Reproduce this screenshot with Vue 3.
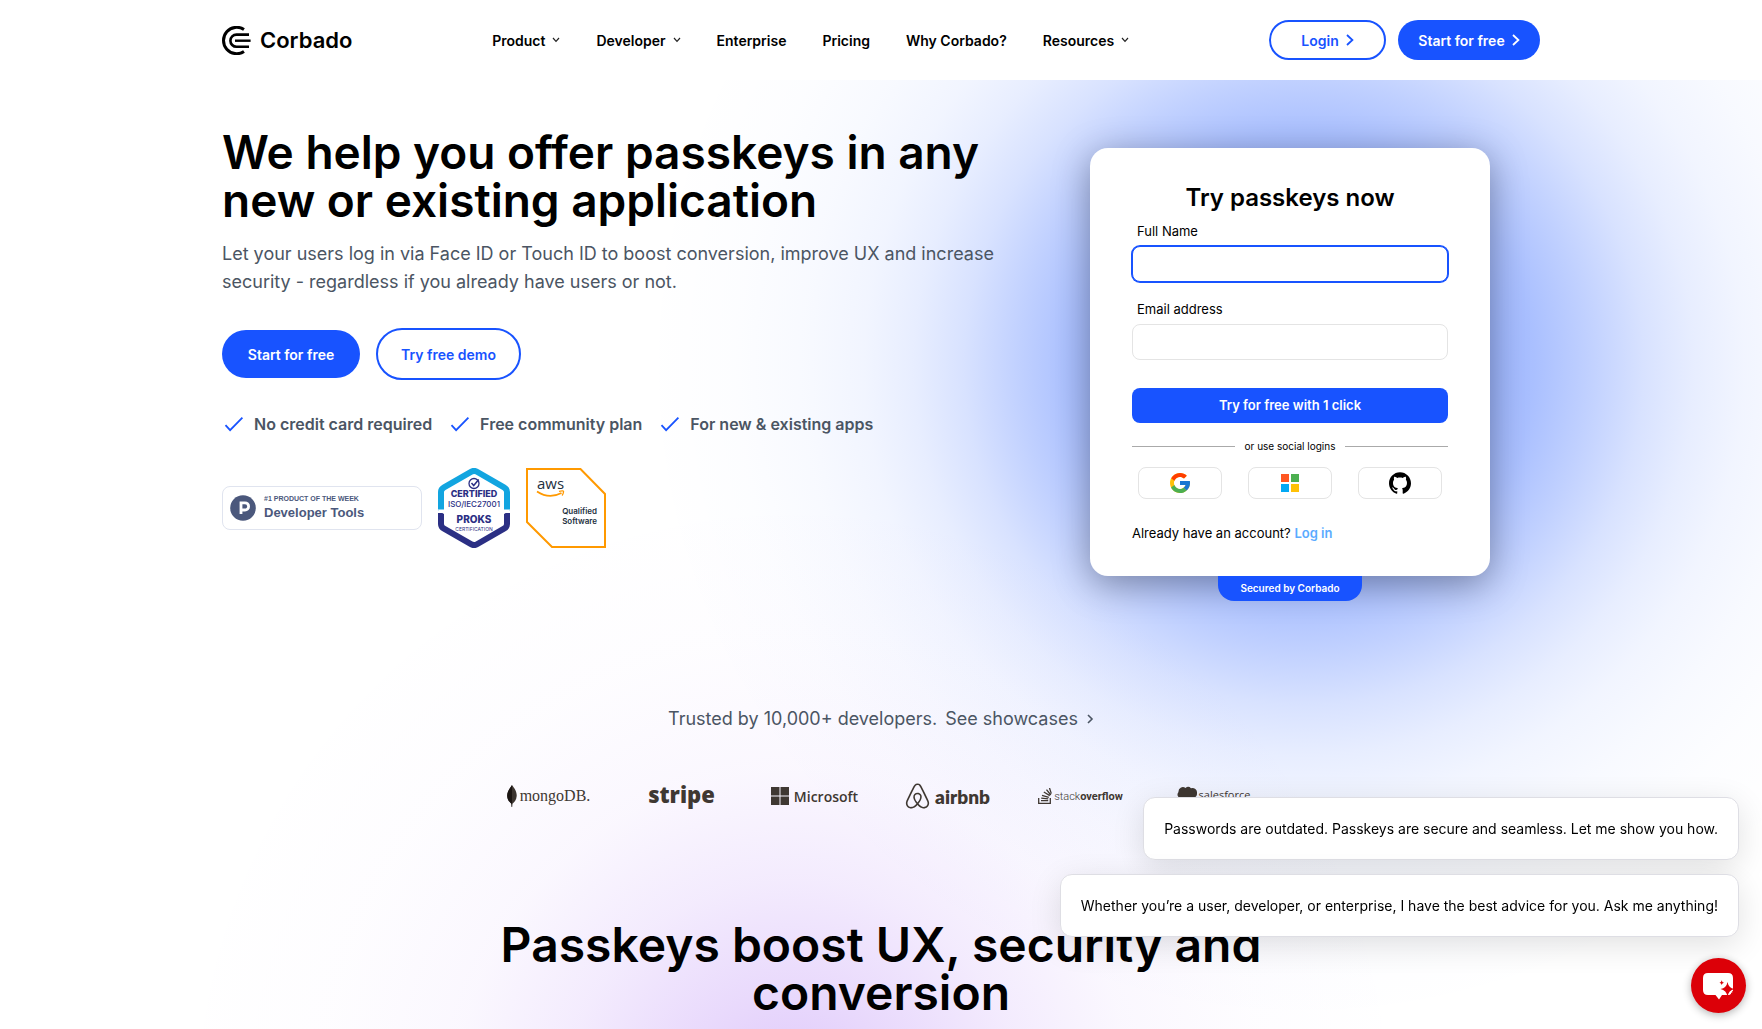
<script setup>
const nav = [
  { label: 'Product', menu: true },
  { label: 'Developer', menu: true },
  { label: 'Enterprise', menu: false },
  { label: 'Pricing', menu: false },
  { label: 'Why Corbado?', menu: false },
  { label: 'Resources', menu: true },
]
const benefits = ['No credit card required', 'Free community plan', 'For new & existing apps']
const messages = [
  'Passwords are outdated. Passkeys are secure and seamless. Let me show you how.',
  'Whether you’re a user, developer, or enterprise, I have the best advice for you. Ask me anything!',
]
</script>

<template>
  <div class="page">
    <header class="header">
      <div class="container header-row">
        <a href="#" class="brand">
          <svg width="29" height="29" viewBox="0 0 29 29" fill="none" stroke="#000" stroke-width="3" aria-hidden="true">
            <path d="M22 3.5A13.2 13.2 0 1 0 22 25.5" />
            <path d="M27 8.6H14.5A5.9 5.9 0 0 0 14.5 20.8H27" stroke-width="2.6" />
            <path d="M13 14.7H28.6" stroke-width="2.4" />
          </svg>
          <span>Corbado</span>
        </a>
        <nav class="nav">
          <a v-for="item in nav" :key="item.label" href="#">
            {{ item.label }}
            <svg v-if="item.menu" width="8" height="6" viewBox="0 0 8 6" fill="none" stroke="#222" stroke-width="1.2"><path d="M1 1l3 3.4L7 1" /></svg>
          </a>
        </nav>
        <div class="actions">
          <a href="#" class="pill outline login">Login
            <svg width="8" height="12" viewBox="0 0 8 12" fill="none" stroke="currentColor" stroke-width="1.8"><path d="M1 1l5.4 5L1 11" /></svg>
          </a>
          <a href="#" class="pill solid start">Start for free
            <svg width="8" height="12" viewBox="0 0 8 12" fill="none" stroke="currentColor" stroke-width="1.8"><path d="M1 1l5.4 5L1 11" /></svg>
          </a>
        </div>
      </div>
    </header>

    <main>
      <section class="container hero">
        <div class="intro">
          <h1>We help you offer passkeys in any new or existing application</h1>
          <p class="lead">Let your users log in via Face ID or Touch ID to boost conversion, improve UX and increase security - regardless if you already have users or not.</p>
          <div class="cta">
            <a href="#" class="pill solid big">Start for free</a>
            <a href="#" class="pill outline big">Try free demo</a>
          </div>
          <ul class="benefits">
            <li v-for="b in benefits" :key="b">
              <svg width="24" height="24" viewBox="0 0 24 24" fill="none" stroke="#1853ff" stroke-width="1.8"><path d="M3.5 13.2l4.6 5L20.4 5.6" /></svg>
              {{ b }}
            </li>
          </ul>
          <div class="badges">
            <div class="ph">
              <svg width="26" height="26" viewBox="0 0 26 26" aria-hidden="true">
                <circle cx="13" cy="13" r="12.8" fill="#4b587c" />
                <path d="M11 19V7.8h4a3.6 3.6 0 0 1 0 7.2H11" fill="none" stroke="#fff" stroke-width="2.8" />
              </svg>
              <div>
                <span class="ph-top">#1 PRODUCT OF THE WEEK</span>
                <span class="ph-main">Developer Tools</span>
              </div>
            </div>
            <svg class="iso" width="72" height="80" viewBox="0 0 72 80">
              <path d="M3 43V24Q3 21 6 19.300L33 3.800Q36 2 39 3.800L66 19.300Q69 21 69 24V43" fill="#fff" stroke="#12a5e0" stroke-width="6" />
              <path d="M3 45V56Q3 59 6 60.700L33 76.200Q36 78 39 76.200L66 60.700Q69 59 69 56V45" fill="#fff" stroke="#2b2f84" stroke-width="6" />
              <path d="M0 42.500l6 3.500V41.500H0zM72 42.500l-6 3.500V41.500h6z" fill="#fff" />
              <circle cx="36" cy="15.500" r="5" fill="none" stroke="#2b2f84" stroke-width="1.300" />
              <path d="M33.500 15l2.200 2.500 5-6" fill="none" stroke="#2b2f84" stroke-width="1.500" />
              <text x="36" y="29" class="iso-a">CERTIFIED</text>
              <text x="36" y="39" class="iso-b">ISO/IEC27001</text>
              <text x="36" y="55" class="iso-c">PROKS</text>
              <text x="36" y="63" class="iso-d">CERTIFICATION</text>
            </svg>
            <svg class="aws" width="80" height="80" viewBox="0 0 80 80">
              <path d="M1 1H54.500L79 26V79H26L1 54Z" fill="#fff" stroke="#f90" stroke-width="2" />
              <text x="11" y="21" class="aws-logo">aws</text>
              <path d="M11 23.500Q23 31.500 35.500 25" fill="none" stroke="#f90" stroke-width="1.700" />
              <path d="M33 23.300Q38 22 37.500 24Q37.300 26 36 27.500" fill="none" stroke="#f90" stroke-width="1.300" />
              <text x="71" y="46" class="aws-text">Qualified</text>
              <text x="71" y="56" class="aws-text">Software</text>
            </svg>
          </div>
        </div>

        <div class="demo">
          <form class="card" @submit.prevent>
            <h2>Try passkeys now</h2>
            <label for="name">Full Name</label>
            <input id="name" class="active" type="text" />
            <label for="email" class="second">Email address</label>
            <input id="email" type="email" />
            <button class="submit" type="submit">Try for free with 1 click</button>
            <div class="divider"><span>or use social logins</span></div>
            <div class="social">
              <button type="button" aria-label="Google">
                <svg width="24" height="24" viewBox="0 0 48 48">
                  <path fill="#FFC107" d="M43.611,20.083H42V20H24v8h11.303c-1.649,4.657-6.08,8-11.303,8c-6.627,0-12-5.373-12-12c0-6.627,5.373-12,12-12c3.059,0,5.842,1.154,7.961,3.039l5.657-5.657C34.046,6.053,29.268,4,24,4C12.955,4,4,12.955,4,24c0,11.045,8.955,20,20,20c11.045,0,20-8.955,20-20C44,22.659,43.862,21.35,43.611,20.083z" />
                  <path fill="#FF3D00" d="M6.306,14.691l6.571,4.819C14.655,15.108,18.961,12,24,12c3.059,0,5.842,1.154,7.961,3.039l5.657-5.657C34.046,6.053,29.268,4,24,4C16.318,4,9.656,8.337,6.306,14.691z" />
                  <path fill="#4CAF50" d="M24,44c5.166,0,9.86-1.977,13.409-5.192l-6.19-5.238C29.211,35.091,26.715,36,24,36c-5.202,0-9.619-3.317-11.283-7.946l-6.522,5.025C9.505,39.556,16.227,44,24,44z" />
                  <path fill="#1976D2" d="M43.611,20.083H42V20H24v8h11.303c-0.792,2.237-2.231,4.166-4.087,5.571l6.193,5.237C36.971,39.205,44,34,44,24C44,22.659,43.862,21.35,43.611,20.083z" />
                </svg>
              </button>
              <button type="button" aria-label="Microsoft">
                <svg width="18" height="18" viewBox="0 0 18 18">
                  <path fill="#ff5722" d="M0 0h8v8H0z" /><path fill="#4caf50" d="M10 0h8v8h-8z" />
                  <path fill="#03a9f4" d="M0 10h8v8H0z" /><path fill="#ffc107" d="M10 10h8v8h-8z" />
                </svg>
              </button>
              <button type="button" aria-label="GitHub">
                <svg width="22" height="22" viewBox="0 0 24 24">
                  <path d="M12 .297c-6.63 0-12 5.373-12 12 0 5.303 3.438 9.8 8.205 11.385.6.113.82-.258.82-.577 0-.285-.01-1.04-.015-2.04-3.338.724-4.042-1.61-4.042-1.61C4.422 18.07 3.633 17.7 3.633 17.7c-1.087-.744.084-.729.084-.729 1.205.084 1.838 1.236 1.838 1.236 1.07 1.835 2.809 1.305 3.495.998.108-.776.417-1.305.76-1.605-2.665-.3-5.466-1.332-5.466-5.93 0-1.31.465-2.38 1.235-3.22-.135-.303-.54-1.523.105-3.176 0 0 1.005-.322 3.3 1.23.96-.267 1.98-.399 3-.405 1.02.006 2.04.138 3 .405 2.28-1.552 3.285-1.23 3.285-1.23.645 1.653.24 2.873.12 3.176.765.84 1.23 1.91 1.23 3.22 0 4.61-2.805 5.625-5.475 5.92.42.36.81 1.096.81 2.22 0 1.606-.015 2.896-.015 3.286 0 .315.21.69.825.57C20.565 22.092 24 17.592 24 12.297c0-6.627-5.373-12-12-12" />
                </svg>
              </button>
            </div>
            <p class="existing">Already have an account? <a href="#">Log in</a></p>
          </form>
          <div class="secured">Secured by Corbado</div>
        </div>
      </section>

      <section class="trust">
        <p>Trusted by 10,000+ developers. <a href="#">See showcases
          <svg width="7" height="10" viewBox="0 0 7 10" fill="none" stroke="currentColor" stroke-width="1.6"><path d="M1 1l4 4-4 4" /></svg></a></p>
        <ul class="logos">
          <li class="mongo">
            <svg width="10" height="22" viewBox="0 0 10 22"><path d="M5 0C7 3 10 6 9.700 11C9.500 15 7 17.500 5.500 18.700L5.200 22H4.700L4.400 18.700C2.500 17 .3 15 .2 11C0 6 3.500 3 5 0z" fill="#3b342f" /><path d="M5 0C3.500 3 0 6 .2 11C.3 15 2.500 17 4.400 18.700L4.700 22H5z" fill="#1b1512" /></svg>
            <span>mongoDB.</span>
          </li>
          <li class="stripe"><span>stripe</span></li>
          <li class="microsoft">
            <svg width="18" height="18" viewBox="0 0 18 18" fill="#3f3832"><path d="M0 0h8.500v8.500H0zM9.500 0H18v8.500H9.500zM0 9.500h8.500V18H0zM9.500 9.500H18V18H9.500z" /></svg>
            <span>Microsoft</span>
          </li>
          <li class="airbnb">
            <svg width="25" height="26" viewBox="0 0 24 24" fill="#3f3832"><path d="M12.001 18.275c-1.353-1.697-2.148-3.184-2.413-4.457-.263-1.027-.16-1.848.291-2.465.477-.71 1.188-1.056 2.121-1.056s1.643.345 2.12 1.063c.446.61.558 1.432.286 2.465-.291 1.298-1.085 2.785-2.412 4.458zm9.601 1.14c-.185 1.246-1.034 2.28-2.2 2.783-2.253.98-4.483-.583-6.392-2.704 3.157-3.951 3.74-7.028 2.385-9.018-.795-1.14-1.933-1.695-3.394-1.695-2.944 0-4.563 2.49-3.927 5.382.37 1.565 1.352 3.343 2.917 5.332-.98 1.085-1.91 1.856-2.732 2.333-.636.344-1.245.558-1.828.609-2.679.399-4.778-2.2-3.825-4.88.132-.345.395-.98.845-1.961l.025-.053c1.464-3.178 3.242-6.79 5.285-10.795l.053-.132.58-1.116c.45-.822.635-1.19 1.351-1.643.346-.21.77-.315 1.246-.315.954 0 1.698.558 2.016 1.007.158.239.345.557.582.953l.558 1.089.08.159c2.041 4.004 3.821 7.608 5.279 10.794l.026.025.533 1.22.318.764c.243.613.294 1.222.213 1.858zm1.22-2.39c-.186-.583-.505-1.271-.9-2.094v-.03c-1.889-4.006-3.642-7.608-5.307-10.844l-.111-.163C15.317 1.461 14.468 0 12.001 0c-2.44 0-3.476 1.695-4.535 3.898l-.081.16c-1.669 3.236-3.421 6.843-5.303 10.847v.053l-.559 1.22c-.21.504-.317.768-.345.847C-.172 20.74 2.611 24 5.98 24c.027 0 .132 0 .265-.027h.372c1.75-.213 3.554-1.325 5.384-3.317 1.829 1.989 3.635 3.104 5.382 3.317h.372c.133.027.239.027.265.027 3.37.003 6.152-3.261 4.802-6.975z" /></svg>
            <span>airbnb</span>
          </li>
          <li class="stack">
            <svg width="14" height="16" viewBox="0 0 14 16" fill="none" stroke="#3f3832" stroke-width="1.300"><path d="M.7 10v5.300h11.600V10M3 12.700h7.200M3.200 10.200l7 .7M4 7.300l6.800 2M5.800 4l6 3.600M8.500 1.600l4.300 5.400M11.500 0l1.800 5.600" /></svg>
            <span>stack<b>overflow</b></span>
          </li>
          <li class="salesforce">
            <svg width="20" height="16" viewBox="0 0 20 16" fill="#3f3832"><path d="M8.500 2A4 4 0 0 1 14 2.300A4.600 4.600 0 0 1 20 7.200A4.500 4.500 0 0 1 14.500 12A4 4 0 0 1 9.500 14A4 4 0 0 1 3.500 12.500A4 4 0 0 1 1.500 6A4.400 4.400 0 0 1 8.500 2z" /></svg>
            <span>salesforce</span>
          </li>
        </ul>
      </section>

      <section class="boost">
        <h2>Passkeys boost UX, security and conversion</h2>
      </section>
    </main>

    <aside class="chat">
      <p v-for="m in messages" :key="m" class="bubble">{{ m }}</p>
      <button type="button" class="chat-button" aria-label="Open chat">
        <svg width="34" height="28" viewBox="0 0 34 28">
          <path d="M6 1H26Q31 1 31 6V18Q31 23 26 23H20L17 27.500L13.500 23H6Q1 23 1 18V6Q1 1 6 1Z" fill="#fff" />
          <path d="M25.500 10Q26.500 16 32.500 17Q26.500 18 25.500 25Q24.500 18 18.500 17Q24.500 16 25.500 10Z" fill="#dc0008" />
          <path d="M19.700 8.300Q20 10.500 22 10.800Q20 11 19.700 13Q19.400 11 17.500 10.800Q19.400 10.500 19.700 8.300Z" fill="#dc0008" />
          <path d="M28.500 23L31.500 18.500" stroke="#dc0008" stroke-width="1" />
        </svg>
      </button>
    </aside>
  </div>
</template>

<style>
html,
body {
  margin: 0;
}
</style>

<style scoped>
* {
  box-sizing: border-box;
}
.page {
  min-height: 100vh;
  overflow: hidden;
  color: #000;
  font-family: Inter, "Liberation Sans", sans-serif;
  background:
    radial-gradient(circle at 74% 365px, rgba(24, 83, 255, 0.5) 0, rgba(24, 83, 255, 0.46) 150px, rgba(24, 83, 255, 0.37) 230px, rgba(24, 83, 255, 0.27) 285px, rgba(24, 83, 255, 0.17) 340px, rgba(24, 83, 255, 0.1) 390px, rgba(24, 83, 255, 0.06) 440px, rgba(24, 83, 255, 0.03) 500px, rgba(24, 83, 255, 0.01) 570px, rgba(24, 83, 255, 0) 660px),
    radial-gradient(circle at 45% 1110px, rgba(140, 60, 240, 0.3) 0, rgba(140, 60, 240, 0.2) 110px, rgba(140, 60, 240, 0.1) 230px, rgba(140, 60, 240, 0.04) 340px, rgba(140, 60, 240, 0.01) 470px, rgba(140, 60, 240, 0) 620px),
    #fff;
}
a {
  color: inherit;
  text-decoration: none;
}
h1,
h2,
p,
ul {
  margin: 0;
  padding: 0;
}
ul {
  list-style: none;
}
.container {
  max-width: 1366px;
  margin: 0 auto;
  padding: 0 24px;
}
.header {
  background: #fff;
}
.header-row {
  height: 80px;
  display: flex;
  align-items: center;
  justify-content: space-between;
}
.brand {
  display: flex;
  align-items: center;
  gap: 9px;
  font-size: 22px;
  font-weight: 600;
}
.nav {
  display: flex;
  gap: 36px;
  font-size: 14px;
  font-weight: 600;
}
.nav a {
  display: flex;
  align-items: center;
  gap: 7px;
}
.actions {
  display: flex;
  gap: 12px;
}
.pill {
  display: flex;
  align-items: center;
  justify-content: center;
  gap: 7px;
  height: 40px;
  border-radius: 26px;
  font-size: 14px;
  font-weight: 600;
}
.solid {
  background: #1853ff;
  color: #fff;
}
.outline {
  border: 2px solid #1853ff;
  background: #fff;
  color: #1853ff;
}
.login {
  width: 117px;
}
.start {
  width: 142px;
}
.hero {
  display: grid;
  grid-template-columns: 1fr 500px;
}
.intro {
  padding-top: 48px;
}
h1,
.boost h2 {
  font-size: 46px;
  line-height: 48px;
  font-weight: 600;
}
.lead {
  margin-top: 16px;
  font-size: 18px;
  line-height: 28px;
  color: #4b5563;
}
.cta {
  display: flex;
  align-items: center;
  gap: 16px;
  margin-top: 32px;
}
.big {
  width: 138px;
  height: 48px;
}
.big.outline {
  width: 145px;
  height: 52px;
}
.benefits {
  display: flex;
  gap: 16px;
  margin-top: 32px;
  font-size: 16px;
  line-height: 24px;
  font-weight: 600;
  color: #4b5563;
}
.benefits li {
  display: flex;
  gap: 8px;
  white-space: nowrap;
}
.badges {
  display: flex;
  align-items: center;
  gap: 16px;
  margin-top: 32px;
}
.ph {
  display: flex;
  align-items: center;
  gap: 8px;
  width: 200px;
  height: 44px;
  padding-left: 7px;
  border: 1px solid #e0e4ef;
  border-radius: 8px;
  background: #fff;
  color: #4b587c;
  font-family: "Liberation Sans", Arial, sans-serif;
  font-weight: 700;
}
.ph span {
  display: block;
}
.ph-top {
  font-size: 7px;
  line-height: 10px;
}
.ph-main {
  font-size: 13px;
  line-height: 18px;
}
.iso text {
  fill: #2b2f84;
  text-anchor: middle;
}
.iso-a {
  font: 800 9px Inter, sans-serif;
}
.iso-b {
  font: 500 8px Inter, sans-serif;
}
.iso-c {
  font: 800 10px Inter, sans-serif;
}
.iso-d {
  font: 400 5px Inter, sans-serif;
}
.aws-logo {
  font: 400 15px "Open Sans", sans-serif;
  fill: #232f3e;
}
.aws-text {
  font: 600 8px Inter, sans-serif;
  fill: #232f3e;
  text-anchor: end;
}
.demo {
  display: flex;
  flex-direction: column;
  align-items: center;
  padding-top: 68px;
}
.card {
  display: flex;
  flex-direction: column;
  width: 400px;
  padding: 34px 42px 33px;
  border-radius: 18px;
  background: #fff;
  box-shadow: 0 8px 36px rgba(0, 0, 0, 0.36);
  font-size: 13px;
  line-height: 20px;
}
.card h2 {
  margin-bottom: 7px;
  font-size: 24px;
  line-height: 32px;
  font-weight: 600;
  text-align: center;
}
.card label {
  padding-left: 5px;
  margin-bottom: 5px;
}
.card .second {
  margin-top: 17px;
}
.card input {
  height: 36px;
  padding: 0 12px;
  border: 1px solid #e4e4e4;
  border-radius: 8px;
  background: #fff;
}
.card input.active {
  border-color: #1853ff;
  box-shadow: 0 0 0 1px #1853ff;
}
.submit {
  height: 35px;
  margin-top: 28px;
  padding: 0 0 2px;
  border: 0;
  border-radius: 8px;
  background: #1853ff;
  color: #fff;
  font: 600 13px Inter, sans-serif;
}
.divider {
  display: flex;
  align-items: center;
  gap: 10px;
  margin-top: 15px;
  font-size: 10px;
  line-height: 16px;
}
.divider::before,
.divider::after {
  content: "";
  flex: 1;
  height: 1px;
  background: #aaa;
}
.social {
  display: flex;
  justify-content: space-between;
  margin-top: 13px;
  padding: 0 6px;
}
.social button {
  display: flex;
  align-items: center;
  justify-content: center;
  width: 84px;
  height: 32px;
  padding: 0;
  border: 1px solid #e4e4e4;
  border-radius: 8px;
  background: #fff;
}
.existing {
  margin-top: 24px;
}
.existing a {
  color: #5aabff;
  font-weight: 600;
}
.secured {
  width: 144px;
  height: 25px;
  border-radius: 0 0 16px 16px;
  background: #1853ff;
  color: #fff;
  font-size: 10px;
  line-height: 24px;
  font-weight: 600;
  text-align: center;
}
.trust {
  margin-top: 104px;
}
.trust p {
  display: flex;
  justify-content: center;
  gap: 8px;
  font-size: 18px;
  line-height: 28px;
  color: #4b5563;
}
.trust a {
  display: flex;
  align-items: center;
  gap: 9px;
}
.logos {
  display: grid;
  grid-template-columns: repeat(6, 133px);
  justify-content: center;
  margin-top: 47px;
  color: #3f3832;
}
.logos li {
  display: flex;
  align-items: center;
  justify-content: center;
  height: 32px;
}
.mongo {
  gap: 3px;
  font: 16px "Liberation Serif", serif;
}
.stripe {
  font: 800 22px "Open Sans", sans-serif;
}
.stripe span {
  margin-bottom: 4px;
}
.microsoft {
  gap: 5px;
  font: 600 14px "Open Sans", sans-serif;
}
.airbnb {
  gap: 5px;
  font: 800 19px Lato, sans-serif;
}
.stack {
  gap: 2px;
  font: 300 11px Roboto, sans-serif;
}
.stack b {
  font-weight: 700;
}
.logos .salesforce {
  gap: 2px;
  padding-bottom: 4px;
  font: 500 11px "Open Sans", sans-serif;
}
.boost {
  padding: 109px 24px 11px;
}
.boost h2 {
  max-width: 800px;
  margin: 0 auto;
  font-size: 48px;
  text-align: center;
}
.chat {
  position: fixed;
  right: 16px;
  bottom: 16px;
  display: flex;
  flex-direction: column;
  align-items: flex-end;
}
.bubble {
  margin: 0 7px 14px 0;
  padding: 20px;
  border: 1px solid #dedee4;
  border-radius: 12px;
  background: #fff;
  box-shadow: 0 8px 32px rgba(0, 0, 0, 0.12);
  font-size: 14px;
  line-height: 21px;
}
.chat-button {
  display: flex;
  align-items: center;
  justify-content: center;
  width: 55px;
  height: 55px;
  margin-top: 7px;
  padding: 0;
  border: 0;
  border-radius: 50%;
  background: #dc0008;
  box-shadow: 0 2px 8px rgba(0, 0, 0, 0.3);
}
</style>
